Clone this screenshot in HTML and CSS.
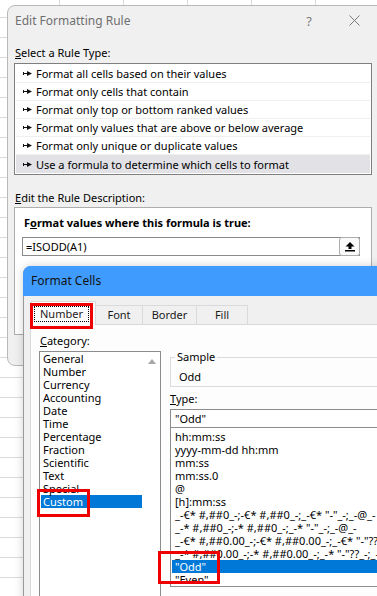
FILE: index.html
```html
<!DOCTYPE html>
<html lang="en">
<head>
  <meta charset="UTF-8" />
  <meta name="viewport" content="width=device-width, initial-scale=1.0"/>
  <title>Edit Formatting Rule</title>
  <link rel="stylesheet" href="styles.css">
</head>
<body>

<div class="dialog rule-dialog">
  <div class="titlebar">
    <span class="title">Edit Formatting Rule</span>
    <span class="help">?</span>
    <svg class="close" width="11" height="11" viewBox="0 0 11 11">
      <path d="M0.5 0.5 L10.5 10.5 M10.5 0.5 L0.5 10.5" stroke="#7a7a7a" stroke-width="1" fill="none"/>
    </svg>
  </div>

  <div class="dialog-body">
    <div class="label"><u>S</u>elect a Rule Type:</div>
    <ul class="rule-list">
      <li><svg class="pointer" width="9" height="5" viewBox="0 0 9 5"><rect x="0" y="1" width="1" height="3"/><rect x="0" y="2" width="5" height="1"/><polygon points="4,0 9,2.5 4,5"/></svg>Format all cells based on their values</li>
      <li><svg class="pointer" width="9" height="5" viewBox="0 0 9 5"><rect x="0" y="1" width="1" height="3"/><rect x="0" y="2" width="5" height="1"/><polygon points="4,0 9,2.5 4,5"/></svg>Format only cells that contain</li>
      <li><svg class="pointer" width="9" height="5" viewBox="0 0 9 5"><rect x="0" y="1" width="1" height="3"/><rect x="0" y="2" width="5" height="1"/><polygon points="4,0 9,2.5 4,5"/></svg>Format only top or bottom ranked values</li>
      <li><svg class="pointer" width="9" height="5" viewBox="0 0 9 5"><rect x="0" y="1" width="1" height="3"/><rect x="0" y="2" width="5" height="1"/><polygon points="4,0 9,2.5 4,5"/></svg>Format only values that are above or below average</li>
      <li><svg class="pointer" width="9" height="5" viewBox="0 0 9 5"><rect x="0" y="1" width="1" height="3"/><rect x="0" y="2" width="5" height="1"/><polygon points="4,0 9,2.5 4,5"/></svg>Format only unique or duplicate values</li>
      <li class="current"><svg class="pointer" width="9" height="5" viewBox="0 0 9 5"><rect x="0" y="1" width="1" height="3"/><rect x="0" y="2" width="5" height="1"/><polygon points="4,0 9,2.5 4,5"/></svg>Use a formula to determine which cells to format</li>
    </ul>

    <div class="label label-desc"><u>E</u>dit the Rule Description:</div>
    <div class="desc-box">
      <div class="desc-label">F<u>o</u>rmat values where this formula is true:</div>
      <div class="formula">
        <span class="formula-text">=ISODD(A1)</span>
        <span class="ref-btn">
          <svg width="10" height="10" viewBox="0 0 10 10">
            <polygon points="5,0 9.5,4.5 6.5,4.5 6.5,7 3.5,7 3.5,4.5 0.5,4.5"/>
            <rect x="0" y="8" width="10" height="1.5"/>
          </svg>
        </span>
      </div>
    </div>
  </div>
</div>

<div class="dialog cells-dialog">
  <div class="cells-title">Format Cells</div>
  <div class="tabs">
    <div class="tab active"><span class="focus">Number</span></div>
    <div class="tab tab-font">Font</div>
    <div class="tab tab-border">Border</div>
    <div class="tab tab-fill">Fill</div>
  </div>

  <div class="panel">
    <div class="category">
      <div class="label"><u>C</u>ategory:</div>
      <div class="cat-list">
        <ul>
          <li>General</li>
          <li>Number</li>
          <li>Currency</li>
          <li>Accounting</li>
          <li>Date</li>
          <li>Time</li>
          <li>Percentage</li>
          <li>Fraction</li>
          <li>Scientific</li>
          <li>Text</li>
          <li>Special</li>
          <li class="selected">Custom</li>
        </ul>
        <div class="scrollbar"><span class="arrow-up"></span></div>
      </div>
    </div>

    <div class="format">
      <div class="sample">
        <div class="legend">Sample</div>
        <div class="sample-value">Odd</div>
      </div>
      <div class="label label-type"><u>T</u>ype:</div>
      <div class="type-input">"Odd"</div>
      <ul class="type-list">
        <li>hh:mm:ss</li>
        <li>yyyy-mm-dd hh:mm</li>
        <li>mm:ss</li>
        <li>mm:ss.0</li>
        <li>@</li>
        <li>[h]:mm:ss</li>
        <li>_-€* #,##0_-;-€* #,##0_-;_-€* "-"_-;_-@_-</li>
        <li>_-* #,##0_-;-* #,##0_-;_-* "-"_-;_-@_-</li>
        <li>_-€* #,##0.00_-;-€* #,##0.00_-;_-€* "-"??_-;_-@_-</li>
        <li>_-* #,##0.00_-;-* #,##0.00_-;_-* "-"??_-;_-@_-</li>
        <li class="selected">"Odd"</li>
        <li>"Even"</li>
      </ul>
    </div>
  </div>
</div>

<div class="mark mark-number"></div>
<div class="mark mark-custom"></div>
<div class="mark mark-odd"></div>

</body>
</html>
```

FILE: styles.css
```css
* {
  box-sizing: border-box;
}

body {
  margin: 0;
  width: 377px;
  height: 596px;
  overflow: hidden;
  position: relative;
  font-family: "Noto Sans", "Liberation Sans", sans-serif;
  font-size: 11px;
  color: #000;
  background-color: #fff;
  background-image:
    linear-gradient(to right, #dadada 1px, transparent 1px),
    linear-gradient(to bottom, #dadada 1px, transparent 1px);
  background-size: 64px 20px;
  background-position: 59px 17px;
}

ul {
  list-style: none;
  margin: 0;
  padding: 0;
}

.label {
  line-height: 16px;
  padding-left: 1px;
}

/* Edit Formatting Rule window */

.dialog {
  position: absolute;
  background: #f0f0f0;
}

.rule-dialog {
  left: 7px;
  top: 5px;
  width: 382px;
  height: 361px;
  border: 1px solid #b9b9b9;
  border-radius: 8px 0 0 8px;
}

.titlebar {
  display: flex;
  align-items: center;
  height: 29px;
  padding: 0 28px 0 7px;
  color: #6f6f6f;
  font-size: 12px;
}

.title {
  flex: 1;
}

.help {
  width: 20px;
  text-align: center;
  font-size: 13px;
  color: #7a7a7a;
}

.close {
  margin-left: 30px;
}

.dialog-body {
  padding: 10px 6px 0;
}

.rule-list {
  width: 358px;
  margin-top: 2px;
  padding: 1px;
  border: 1px solid #7f7f7f;
  background: #fff;
}

.rule-list li {
  display: flex;
  align-items: center;
  height: 18px;
  padding-left: 7px;
  border-bottom: 1px solid #efefef;
  white-space: nowrap;
}

.rule-list li.current {
  background: #e1e1e6;
  border-bottom: none;
}

.pointer {
  margin-right: 4px;
  fill: #111;
}

.label-desc {
  margin-top: 15px;
}

.desc-box {
  width: 358px;
  height: 128px;
  margin-top: 1px;
  padding: 7px 0 0 7px;
  border: 1px solid #adadad;
  background: #fff;
}

.desc-label {
  font-weight: bold;
  line-height: 16px;
  padding-left: 2px;
}

.formula {
  display: flex;
  align-items: center;
  width: 338px;
  height: 19px;
  margin-top: 6px;
  border: 1px solid #8a8a8a;
}

.formula-text {
  flex: 1;
  padding-left: 3px;
}

.ref-btn {
  display: flex;
  align-items: center;
  justify-content: center;
  width: 21px;
  height: 19px;
  margin: -1px -1px -1px 0;
  border: 1px solid #adadad;
  border-radius: 3px;
  background: #fafafa;
}

/* Format Cells window */

.cells-dialog {
  left: 23px;
  top: 266px;
  width: 380px;
  height: 340px;
  border: 1px solid #9a9a9a;
  border-top-color: #3f9cfe;
  border-radius: 8px 0 0 0;
  box-shadow: 0 0 10px rgba(0, 0, 0, 0.18);
}

.cells-title {
  height: 30px;
  line-height: 30px;
  padding-left: 8px;
  margin: -1px 0 0 -1px;
  background: #3f9cfe;
  border-radius: 8px 0 0 0;
  font-size: 12px;
  color: #111;
}

.tabs {
  display: flex;
  align-items: flex-end;
  height: 28px;
  padding-left: 7px;
}

.tab {
  height: 19px;
  line-height: 18px;
  text-align: center;
  border: 1px solid #dadada;
  border-bottom: none;
  color: #1a1a1a;
}

.tab.active {
  width: 65px;
  height: 24px;
  margin-bottom: -1px;
  padding: 3px 0 0 2px;
  text-align: left;
  background: #fdfdfd;
  position: relative;
}

.focus {
  display: inline-block;
  line-height: 14px;
  padding: 0 5px 0 5px;
  border: 1px dotted #000;
}

.tab-font {
  width: 47px;
  border-left: none;
}

.tab-border {
  width: 54px;
  border-left: none;
}

.tab-fill {
  width: 51px;
  border-left: none;
}

.panel {
  display: flex;
  height: 280px;
  margin-left: 6px;
  padding: 8px 0 0 8px;
  border: 1px solid #dadada;
  background: #fdfdfd;
}

.category {
  width: 122px;
}

.cat-list {
  display: flex;
  height: 250px;
  margin-top: 2px;
  border: 1px solid #8c8c8c;
  background: #fff;
}

.cat-list ul {
  width: 103px;
  padding: 0 1px;
}

.cat-list li,
.type-list li {
  line-height: 13px;
  height: 13px;
  white-space: nowrap;
}

.cat-list li {
  padding-left: 2px;
}

.cat-list li.selected,
.type-list li.selected {
  background: #0078d7;
  color: #fff;
}

.scrollbar {
  width: 17px;
  display: flex;
  justify-content: center;
}

.arrow-up {
  width: 0;
  height: 0;
  margin-top: 7px;
  border-left: 4px solid transparent;
  border-right: 4px solid transparent;
  border-bottom: 5px solid #a6a6a6;
}

.format {
  width: 260px;
  margin-left: 9px;
}

.sample {
  height: 30px;
  margin-top: 24px;
  border: 1px solid #dcdcdc;
}

.legend {
  width: max-content;
  margin: -9px 0 0 4px;
  padding: 0 2px;
  line-height: 16px;
  background: #fdfdfd;
}

.sample-value {
  margin-top: 4px;
  padding-left: 8px;
  line-height: 16px;
}

.label-type {
  margin-top: 4px;
  padding-left: 0;
}

.type-input {
  height: 19px;
  margin-top: 2px;
  padding-left: 4px;
  line-height: 17px;
  border: 1px solid #8c8c8c;
  background: #fff;
}

.type-list {
  height: 159px;
  padding: 2px 1px 0;
  border: 1px solid #8c8c8c;
  border-top: none;
  background: #fff;
  overflow: hidden;
}

.type-list li {
  padding-left: 3px;
}

/* red highlight boxes drawn over the screenshot */

.mark {
  position: absolute;
  border: 3px solid #ee0000;
}

.mark-number {
  left: 30px;
  top: 303px;
  width: 63px;
  height: 26px;
}

.mark-custom {
  left: 37px;
  top: 489px;
  width: 53px;
  height: 28px;
}

.mark-odd {
  left: 158px;
  top: 551px;
  width: 62px;
  height: 33px;
}
```
